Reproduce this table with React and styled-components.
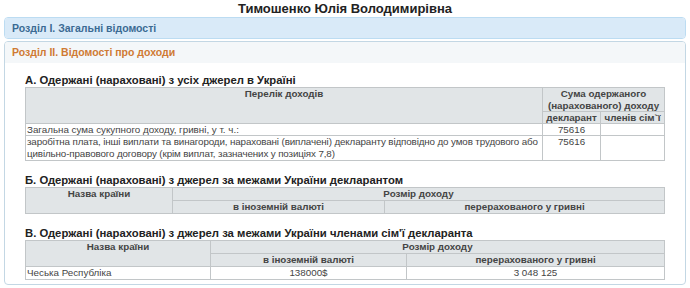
import React from "react";
import styled, { createGlobalStyle } from "styled-components";

const Global = createGlobalStyle`
  html, body { margin: 0; padding: 0; background: #fff; }
  body { font-family: "Liberation Sans", Arial, sans-serif; color: #333; }
`;

const Page = styled.div`
  width: 690px;
  padding: 0 4px;
  box-sizing: border-box;
`;

const Title = styled.h1`
  margin: 0;
  height: 17px;
  font-size: 13px;
  line-height: 17px;
  font-weight: bold;
  text-align: center;
  color: #222;
`;

const Panel = styled.div`
  border: 1px solid ${(p) => (p.$info ? "#bcdcf2" : "#c3d7e4")};
  border-radius: 4px;
  background: #fff;
  margin-top: ${(p) => p.$mt || 0}px;
  overflow: hidden;
`;

const PanelHeading = styled.div`
  height: 20px;
  line-height: 20px;
  padding: 0 7px;
  font-size: 10.5px;
  font-weight: bold;
  background: ${(p) => (p.$info ? "#d9eaf8" : "#f4f7f9")};
  color: ${(p) => (p.$info ? "#3b6a93" : "#cf7a33")};
  border-bottom: ${(p) => (p.$info ? "none" : "1px solid #f4f7f9")};
`;

const PanelBody = styled.div`
  padding: 10px 20px 4px 20px;
`;

const SectionTitle = styled.h3`
  margin: ${(p) => (p.$first ? 0 : 12)}px 0 0 0;
  font-size: 11.3px;
  line-height: 14px;
  font-weight: bold;
  color: #222;
`;

const Table = styled.table`
  width: 100%;
  border-collapse: collapse;
  table-layout: fixed;
  font-size: 9.8px;
  border: 1px solid #c2c6c8;
`;

const Th = styled.th`
  background: #e1e5e7;
  border: 1px solid #c2c6c8;
  color: #444;
  font-weight: bold;
  text-align: center;
  vertical-align: top;
  padding: 0 1px;
  line-height: ${(p) => p.$lh || 12}px;
`;

const Td = styled.td`
  border: 1px solid #c2c6c8;
  color: #444;
  text-align: ${(p) => (p.$center ? "center" : "left")};
  vertical-align: top;
  padding: 0 1px;
  line-height: ${(p) => p.$lh || 12}px;
  letter-spacing: ${(p) => (p.$tight ? "-0.12px" : "normal")};
`;

export default function App() {
  return (
    <>
      <Global />
      <Page>
        <Title>Тимошенко Юлія Володимирівна</Title>
        <Panel $info>
          <PanelHeading $info>Розділ І. Загальні відомості</PanelHeading>
        </Panel>
        <Panel $mt={2}>
          <PanelHeading>Розділ ІІ. Відомості про доходи</PanelHeading>
          <PanelBody>
            <SectionTitle $first>А. Одержані (нараховані) з усіх джерел в Україні</SectionTitle>
            <Table>
              <colgroup>
                <col style={{ width: 517 }} />
                <col style={{ width: 58 }} />
                <col />
              </colgroup>
              <thead>
                <tr>
                  <Th rowSpan={2} $lh={11.5}>Перелік доходів</Th>
                  <Th colSpan={2} $lh={11.5}>Сума одержаного (нарахованого) доходу</Th>
                </tr>
                <tr>
                  <Th $lh={11}>декларант</Th>
                  <Th $lh={11}>членів сім`ї</Th>
                </tr>
              </thead>
              <tbody>
                <tr>
                  <Td $lh={11}>Загальна сума сукупного доходу, гривні, у т. ч.:</Td>
                  <Td $lh={11} $center>75616</Td>
                  <Td $lh={11}></Td>
                </tr>
                <tr>
                  <Td $lh={12} $tight>
                    заробітна плата, інші виплати та винагороди, нараховані (виплачені) декларанту відповідно до умов трудового або
                    <br />
                    цивільно-правового договору (крім виплат, зазначених у позиціях 7,8)
                  </Td>
                  <Td $lh={12} $center>75616</Td>
                  <Td $lh={12}></Td>
                </tr>
              </tbody>
            </Table>

            <SectionTitle>Б. Одержані (нараховані) з джерел за межами України декларантом</SectionTitle>
            <Table>
              <colgroup>
                <col style={{ width: 147 }} />
                <col style={{ width: 212 }} />
                <col />
              </colgroup>
              <thead>
                <tr>
                  <Th rowSpan={2}>Назва країни</Th>
                  <Th colSpan={2}>Розмір доходу</Th>
                </tr>
                <tr>
                  <Th>в іноземній валюті</Th>
                  <Th>перерахованого у гривні</Th>
                </tr>
              </thead>
            </Table>

            <SectionTitle>В. Одержані (нараховані) з джерел за межами України членами сім'ї декларанта</SectionTitle>
            <Table>
              <colgroup>
                <col style={{ width: 185 }} />
                <col style={{ width: 196 }} />
                <col />
              </colgroup>
              <thead>
                <tr>
                  <Th rowSpan={2}>Назва країни</Th>
                  <Th colSpan={2}>Розмір доходу</Th>
                </tr>
                <tr>
                  <Th>в іноземній валюті</Th>
                  <Th>перерахованого у гривні</Th>
                </tr>
              </thead>
              <tbody>
                <tr>
                  <Td>Чеська Республіка</Td>
                  <Td $center>138000$</Td>
                  <Td $center>3 048 125</Td>
                </tr>
              </tbody>
            </Table>
          </PanelBody>
        </Panel>
      </Page>
    </>
  );
}
